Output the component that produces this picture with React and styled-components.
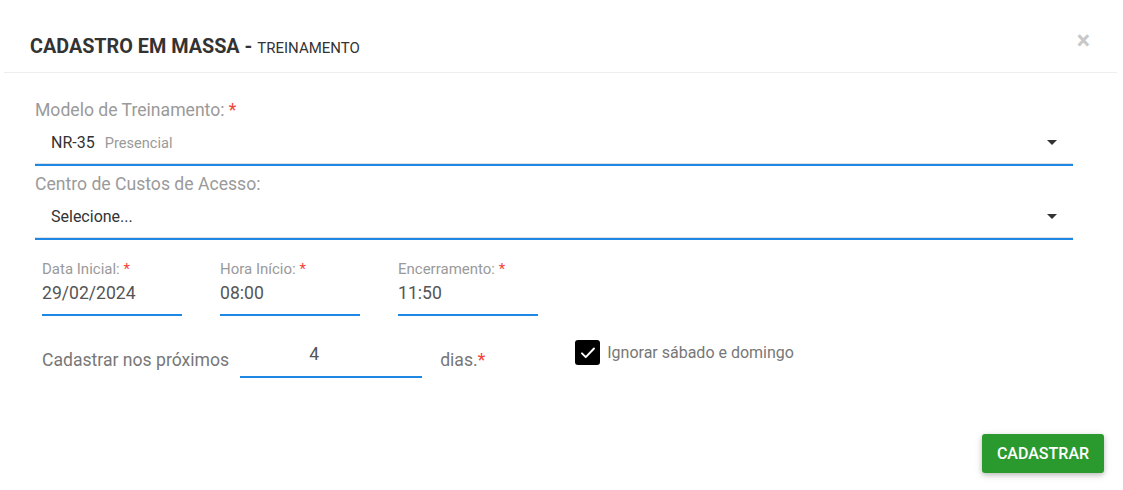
import React from 'react';
import styled, { createGlobalStyle } from 'styled-components';

const GlobalStyle = createGlobalStyle`
    body {
        margin: 0;
        background: #fff;
        font-family: Roboto, "Liberation Sans", Arial, sans-serif;
    }
`;

const Modal = styled.div`
    margin: 0 6px 0 4px;
    background: #fff;
    min-height: 490px;
`;

const Header = styled.div`
    box-sizing: border-box;
    display: flex;
    align-items: flex-start;
    justify-content: space-between;
    height: 73px;
    padding: 35px 27px 0 26px;
    border-bottom: 1px solid #eceef0;
`;

const Title = styled.h5`
    margin: 0;
    font-size: 19.8px;
    line-height: 23px;
    font-weight: 700;
    color: #333;
    small {
        font-size: 15px;
        font-weight: 400;
    }
`;

const Close = styled.button`
    border: 0;
    background: none;
    padding: 0;
    margin-top: -7px;
    font-size: 25px;
    line-height: 1;
    color: #c8c8c8;
    font-family: inherit;
    font-weight: 700;
`;

const Body = styled.div`
    padding: 27px 44px 0 31px;
`;

const Field = styled.div`
    margin-top: ${p => p.$gap || 0}px;
`;

const Label = styled.label`
    display: block;
    font-size: ${p => p.$small ? 15 : 17.6}px;
    line-height: ${p => p.$small ? 17 : 20}px;
    color: #9a9a9a;
`;

const Req = styled.span`
    color: #f44336;
`;

const Select = styled.div`
    display: flex;
    align-items: center;
    height: 44px;
    padding: 0 16px;
    border-bottom: 2px solid #1e88e5;
    box-shadow: inset 0 -1px 0 #e0e0e0;
    font-size: 16px;
    color: #333;
`;

const SelectValue = styled.div`
    flex: 1;
    display: flex;
    align-items: baseline;
    gap: 10px;
`;

const Hint = styled.span`
    font-size: 14.6px;
    color: #9a9a9a;
`;

const Caret = styled.span`
    width: 0;
    height: 0;
    border-left: 5px solid transparent;
    border-right: 5px solid transparent;
    border-top: 5px solid #333;
`;

const DateRow = styled.div`
    display: flex;
    gap: 38px;
    padding-left: 7px;
    margin-top: 21px;
`;

const DateField = styled.div`
    width: 140px;
`;

const Input = styled.input`
    box-sizing: border-box;
    display: block;
    width: 100%;
    border: 0;
    border-bottom: 2px solid #1e88e5;
    outline: none;
    padding: 5px 0 11px;
    font-family: inherit;
    font-size: 17.6px;
    line-height: 20px;
    color: #555;
    background: transparent;
    text-align: ${p => p.$center ? 'center' : 'left'};
`;

const DaysRow = styled.div`
    display: flex;
    align-items: flex-start;
    padding-left: 7px;
    margin-top: 28px;
`;

const DaysText = styled.span`
    font-size: 17.6px;
    line-height: 20px;
    color: #777;
    margin-top: 6px;
`;

const DaysInput = styled.div`
    width: 182px;
    margin: 0 18px 0 11px;
    ${Input} {
        padding: 0 34px 12px 0;
    }
`;

const Check = styled.label`
    display: flex;
    align-items: center;
    gap: 7px;
    margin: -4px 0 0 90px;
    font-size: 16px;
    color: #777;
`;

const Box = styled.span`
    display: flex;
    align-items: center;
    justify-content: center;
    width: 25px;
    height: 25px;
    border-radius: 3px;
    background: #000;
`;

const Footer = styled.div`
    display: flex;
    justify-content: flex-end;
    margin-top: 56px;
    margin-right: -31px;
`;

const Button = styled.button`
    width: 122px;
    height: 39px;
    border: 0;
    border-radius: 3px;
    background: #2b9a2e;
    color: #fff;
    font-family: inherit;
    font-size: 16px;
    font-weight: 500;
    box-shadow: 0 2px 5px rgba(0, 0, 0, 0.2), 0 2px 10px rgba(0, 0, 0, 0.1);
`;

export default function App() {
    return (
        <>
            <GlobalStyle />
            <Modal>
                <Header>
                    <Title>CADASTRO EM MASSA - <small>TREINAMENTO</small></Title>
                    <Close>×</Close>
                </Header>
                <Body>
                    <Field>
                        <Label>Modelo de Treinamento: <Req>*</Req></Label>
                        <Select>
                            <SelectValue>NR-35 <Hint>Presencial</Hint></SelectValue>
                            <Caret />
                        </Select>
                    </Field>
                    <Field $gap={8}>
                        <Label>Centro de Custos de Acesso:</Label>
                        <Select>
                            <SelectValue>Selecione...</SelectValue>
                            <Caret />
                        </Select>
                    </Field>
                    <DateRow>
                        <DateField>
                            <Label $small>Data Inicial: <Req>*</Req></Label>
                            <Input defaultValue="29/02/2024" />
                        </DateField>
                        <DateField>
                            <Label $small>Hora Início: <Req>*</Req></Label>
                            <Input defaultValue="08:00" />
                        </DateField>
                        <DateField>
                            <Label $small>Encerramento: <Req>*</Req></Label>
                            <Input defaultValue="11:50" />
                        </DateField>
                    </DateRow>
                    <DaysRow>
                        <DaysText>Cadastrar nos próximos</DaysText>
                        <DaysInput>
                            <Input $center defaultValue="4" />
                        </DaysInput>
                        <DaysText>dias.<Req>*</Req></DaysText>
                        <Check>
                            <Box>
                                <svg width="18" height="18" viewBox="0 0 24 24" fill="none" stroke="#fff" strokeWidth="2.6" strokeLinecap="round" strokeLinejoin="round">
                                    <path d="M4 12.5l5 5L20 6" />
                                </svg>
                            </Box>
                            Ignorar sábado e domingo
                        </Check>
                    </DaysRow>
                    <Footer>
                        <Button>CADASTRAR</Button>
                    </Footer>
                </Body>
            </Modal>
        </>
    );
}
